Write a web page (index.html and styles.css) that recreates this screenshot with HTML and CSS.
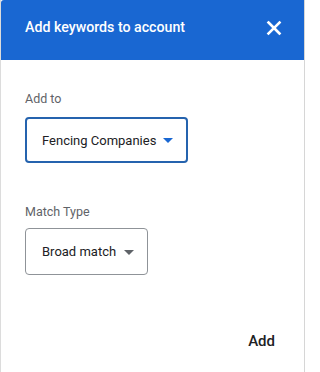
FILE: index.html
```html
<!DOCTYPE html>
<html lang="en">
<head>
<meta charset="utf-8">
<title>Add keywords to account</title>
<link rel="stylesheet" href="styles.css">
</head>
<body>
<div class="dialog">
  <header class="dialog-header">
    <h1 class="dialog-title">Add keywords to account</h1>
    <button class="close-btn" aria-label="Close">
      <svg width="16" height="16" viewBox="0 0 16 16"><path d="M2.5 2.5 L13.5 13.5 M13.5 2.5 L2.5 13.5" stroke="#fff" stroke-width="2.6" stroke-linecap="square"/></svg>
    </button>
  </header>
  <main class="dialog-body">
    <div class="label label-first">Add to</div>
    <div class="select select-active">
      <span class="select-text">Fencing Companies</span>
      <span class="arrow arrow-blue"></span>
    </div>
    <div class="label label-second">Match Type</div>
    <div class="select select-plain">
      <span class="select-text">Broad match</span>
      <span class="arrow arrow-grey"></span>
    </div>
  </main>
  <footer class="dialog-footer">
    <button class="text-btn">Add</button>
  </footer>
</div>
</body>
</html>
```
FILE: styles.css
```css
html, body {
  margin: 0;
  padding: 0;
  background: #ffffff;
}
body {
  font-family: Roboto, "Liberation Sans", Arial, sans-serif;
  width: 307px;
  height: 372px;
  overflow: hidden;
}
.dialog {
  width: 303px;
  height: 372px;
  background: #ffffff;
  border-left: 1px solid #dcdcdc;
  border-right: 1px solid #d6d6d6;
  display: flex;
  flex-direction: column;
}
.dialog-header {
  height: 60px;
  box-sizing: border-box;
  background: #1967d2;
  border-top-left-radius: 3px;
  display: flex;
  align-items: flex-start;
  justify-content: space-between;
  padding: 17px 22px 0 24px;
}
.dialog-title {
  margin: 0;
  font-size: 14.2px;
  line-height: 20px;
  font-weight: 500;
  color: #ffffff;
}
.close-btn {
  margin: 3px 0 0 0;
  padding: 0;
  border: 0;
  background: transparent;
  width: 16px;
  height: 16px;
  display: flex;
}
.dialog-body {
  padding: 0 24px;
  display: flex;
  flex-direction: column;
  align-items: flex-start;
}
.label {
  font-size: 12.5px;
  line-height: 16px;
  color: #5f6368;
}
.label-first {
  margin-top: 31px;
  margin-bottom: 10px;
}
.label-second {
  margin-top: 41px;
  margin-bottom: 8px;
}
.select {
  box-sizing: border-box;
  height: 46px;
  display: flex;
  align-items: center;
  gap: 7px;
  border-radius: 4px;
  color: #202124;
}
.select-active {
  border: 2px solid #2563ae;
  padding: 1px 13px 0 15px;
}
.select-plain {
  border: 1px solid #8f9398;
  height: 47px;
  gap: 8px;
  padding: 1px 13px 0 16px;
}
.select-text {
  font-size: 13px;
  line-height: 20px;
}
.arrow {
  width: 0;
  height: 0;
  border-left: 5px solid transparent;
  border-right: 5px solid transparent;
}
.arrow-blue {
  border-top: 5px solid #1967d2;
}
.arrow-grey {
  border-top: 5px solid #5f6368;
}
.dialog-footer {
  display: flex;
  justify-content: flex-end;
  padding: 56px 29px 0 0;
}
.text-btn {
  margin: 0;
  padding: 0;
  border: 0;
  background: transparent;
  font-family: Roboto, "Liberation Sans", Arial, sans-serif;
  font-size: 15px;
  line-height: 20px;
  font-weight: 500;
  color: #202124;
}
```
